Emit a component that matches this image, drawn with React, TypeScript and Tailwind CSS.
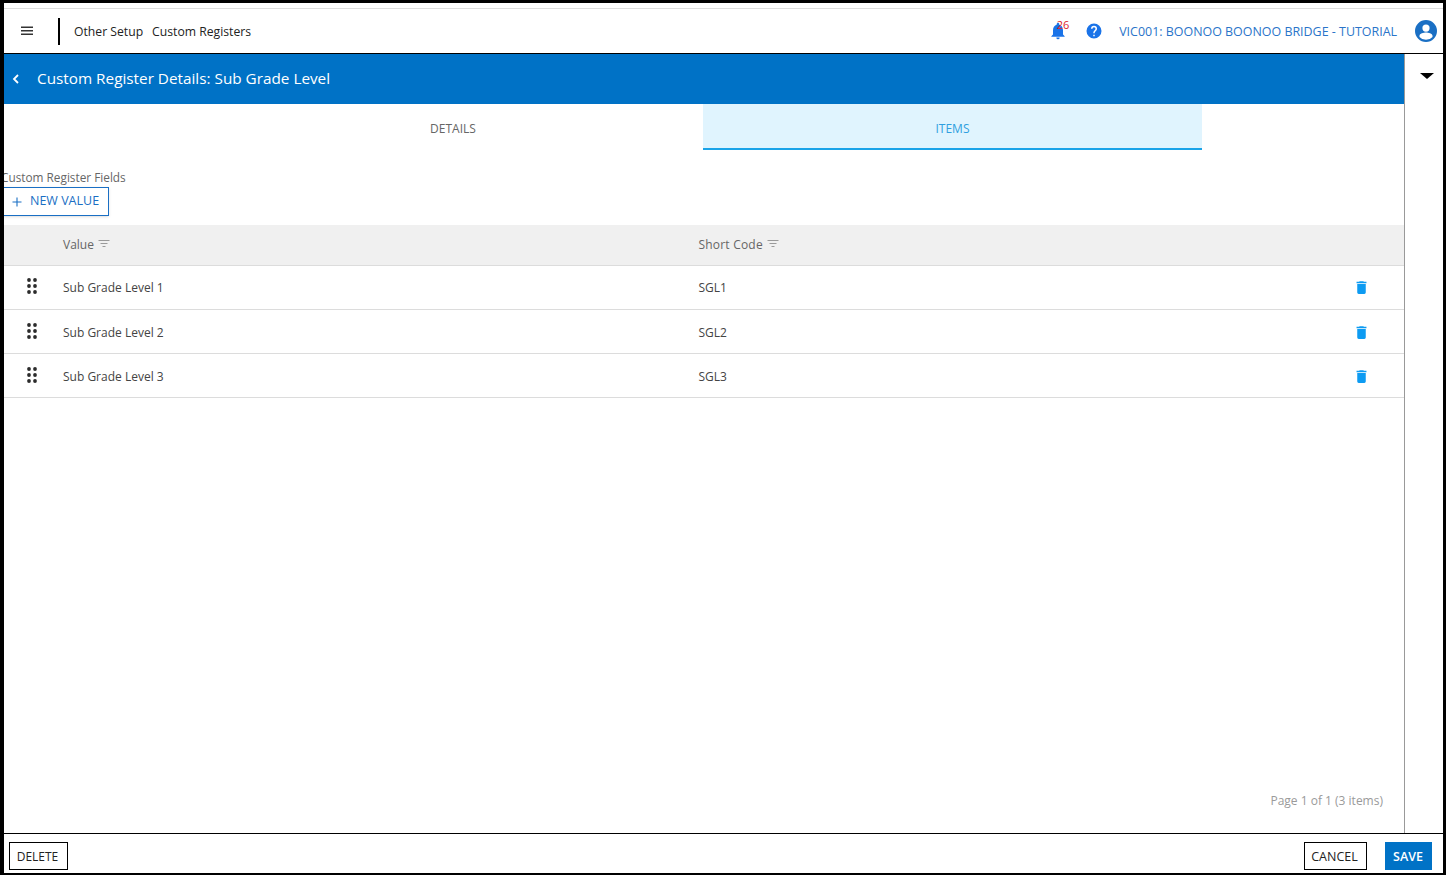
import React from "react";

const font = { fontFamily: '"Open Sans","Noto Sans",sans-serif' };

function FilterIcon() {
  return (
    <svg width="12" height="10" viewBox="0 0 12 10" className="ml-[4px] mt-[-3px]" fill="none" stroke="#9a9a9a" strokeWidth="1">
      <path d="M0.5 1.5H11.5M2.5 4.5H9.5M4.500 7.500H7.500" />
    </svg>
  );
}

function Grip() {
  return (
    <svg width="10" height="16" viewBox="0 0 10 16" fill="#2b2b2b">
      {[2, 8, 14].map((y) => (
        <React.Fragment key={y}>
          <circle cx="2" cy={y} r="1.9" />
          <circle cx="8" cy={y} r="1.9" />
        </React.Fragment>
      ))}
    </svg>
  );
}

function Trash() {
  return (
    <svg width="17" height="17" viewBox="0 0 24 24" fill="#0d9bf2">
      <path d="M6 19a2 2 0 0 0 2 2h8a2 2 0 0 0 2-2V7H6v12zM19 4h-3.500l-1-1h-5l-1 1H5v2h14V4z" />
    </svg>
  );
}

function Row({ name, code, low }: { name: string; code: string; low?: boolean }) {
  return (
    <div className={low ? "flex h-[44px] items-center border-b border-[#dcdcdc] pt-[2px] text-[12px] text-[#444444]" : "flex h-[44px] items-center border-b border-[#dcdcdc] text-[12px] text-[#444444]"}>
      <div className="mt-[-3px] flex w-[56px] justify-center">
        <Grip />
      </div>
      <div className="w-[638.5px] pl-[3px]">{name}</div>
      <div className="flex-1">{code}</div>
      <div className="mr-[34px] flex">
        <Trash />
      </div>
    </div>
  );
}

export default function App() {
  return (
    <div style={font} className="flex h-[875px] w-[1446px] flex-col overflow-hidden border-t-[3px] border-r-[3px] border-b-[2px] border-l-[4px] border-black bg-white">
      <header className="flex h-[51px] shrink-0 items-center border-b border-black pt-[6px]">
        <div className="absolute left-[4px] right-[3px] top-[8px] h-px bg-[#dddddd]" />
        <svg width="14" height="12" viewBox="0 0 14 12" className="ml-[16px] shrink-0" stroke="#333333" strokeWidth="1.4">
          <path d="M1 2.2H13M1 5.7H13M1 9.2H13" />
        </svg>
        <div className="ml-[24px] h-[27px] w-[2px] bg-black" />
        <div className="ml-[14px] mt-[2px] text-[12.2px] text-[#222222]">Other Setup</div>
        <div className="ml-[9px] mt-[2px] text-[12.2px] text-[#222222]">Custom Registers</div>
        <div className="relative ml-auto flex h-[18px] w-[16px] items-center">
          <svg width="16" height="18" viewBox="0 0 24 24" fill="#1a73e8" preserveAspectRatio="none">
            <path d="M12 23a2.500 2.500 0 0 0 2.500-2.500h-5A2.500 2.500 0 0 0 12 23zm7.500-6.500V11c0-3.600-2-6.400-5.500-7.200V3a2 2 0 0 0-4 0v.8C6.500 4.600 4.500 7.400 4.500 11v5.500L2 19v.5h20V19l-2.500-2.500z" />
          </svg>
          <span className="absolute left-[7px] top-[-4px] text-[11px] leading-[14px] text-[#e0202a]">26</span>
        </div>
        <svg width="18" height="18" viewBox="0 0 24 24" fill="#1a73e8" className="ml-[19px]">
          <path d="M12 2a10 10 0 1 0 0 20 10 10 0 0 0 0-20zm1 17h-2v-2h2v2zm2.100-7.700-.9.9c-.7.700-1.200 1.300-1.200 2.800h-2v-.5c0-1.100.5-2.100 1.200-2.800l1.200-1.300c.4-.3.600-.8.600-1.400a2 2 0 0 0-4 0H8a4 4 0 0 1 8 0c0 .9-.4 1.700-.9 2.300z" />
        </svg>
        <div className="ml-[16.5px] mt-[2px] text-[12.45px] text-[#2a74c9]">VIC001: BOONOO BOONOO BRIDGE - TUTORIAL</div>
        <svg width="24" height="24" viewBox="0 0 24 24" fill="#1a6fc4" className="ml-[17px] mr-[5px]">
          <path d="M12 1a11 11 0 1 0 0 22 11 11 0 0 0 0-22zm0 4.500a3.600 3.600 0 1 1 0 7.200 3.600 3.600 0 0 1 0-7.200zM5.500 16.800c0-2.200 4.300-3.300 6.500-3.300s6.500 1.100 6.500 3.300v1.100a8.700 8.700 0 0 1-13 0v-1.100z" />
        </svg>
      </header>

      <div className="flex min-h-0 flex-1">
        <main className="flex w-[1400px] shrink-0 flex-col">
          <div className="ml-[-1px] flex h-[50px] shrink-0 items-center bg-[#0072c6] text-white">
            <svg width="8" height="10" viewBox="0 0 8 10" className="ml-[9px]" fill="none" stroke="white" strokeWidth="1.800">
              <path d="M6 1L2 5L6 9" />
            </svg>
            <div className="ml-[17px] text-[15.3px] leading-none">Custom Register Details: Sub Grade Level</div>
          </div>

          <div className="ml-[199px] flex h-[46px] shrink-0 text-[12px]">
            <div className="flex w-[500px] items-center justify-center pt-[4px] text-[#666666]">DETAILS</div>
            <div className="flex w-[499px] items-center justify-center border-b-2 border-[#1aa3e8] bg-[#e0f4fe] pt-[6px] text-[#2f9fe0]">ITEMS</div>
          </div>

          <div className="ml-[-3px] mt-[18px] text-[11.8px] leading-[18px] text-[#666666] [clip-path:inset(0_0_0_3px)]">Custom Register Fields</div>
          <button className="ml-[-2px] mt-[1px] flex h-[29px] w-[107px] items-center border border-[#1a6fc4] bg-white text-[12.5px] font-medium text-[#1a6fc4] shadow-sm">
            <svg width="10" height="10" viewBox="0 0 10 10" className="ml-[9px]" stroke="#1a6fc4" strokeWidth="1.100">
              <path d="M5 0.500V9.500M0.500 5H9.500" />
            </svg>
            <span className="ml-[8px]">NEW VALUE</span>
          </button>

          <div className="mt-[9px] flex h-[41px] shrink-0 items-center border-b border-[#dcdcdc] bg-[#f0f0f0] text-[12px] text-[#666666]">
            <div className="flex w-[694.5px] items-center pl-[59px]">
              Value
              <FilterIcon />
            </div>
            <div className="flex items-center tracking-[0.2px]">
              Short Code
              <FilterIcon />
            </div>
          </div>

          <Row name="Sub Grade Level 1" code="SGL1" />
          <Row name="Sub Grade Level 2" code="SGL2" low />
          <Row name="Sub Grade Level 3" code="SGL3" low />

          <div className="mb-[23px] mr-[21px] mt-auto text-right text-[12px] text-[#9a9a9a]">Page 1 of 1 (3 items)</div>
        </main>
        <aside className="flex flex-1 justify-center border-l border-[#999999] pl-[6px] pt-[19px]">
          <div className="h-0 w-0 border-x-[7px] border-t-[6px] border-x-transparent border-t-black" />
        </aside>
      </div>

      <footer className="flex h-[40px] shrink-0 items-start border-t border-black pt-[8px]">
        <button className="ml-[5px] flex h-[28px] w-[59px] items-center justify-center border border-black bg-white pr-[2px] pt-[2px] text-[12px] text-[#222222]">DELETE</button>
        <button className="ml-auto flex h-[28px] w-[63px] items-center justify-center border border-black bg-white pr-[2px] pt-[2px] text-[12.5px] text-[#222222]">CANCEL</button>
        <button className="ml-[18px] mr-[11px] flex h-[28px] w-[47px] items-center justify-center bg-[#0072c6] pr-[1px] pt-[2px] text-[12.5px] font-semibold text-white">SAVE</button>
      </footer>
    </div>
  );
}
